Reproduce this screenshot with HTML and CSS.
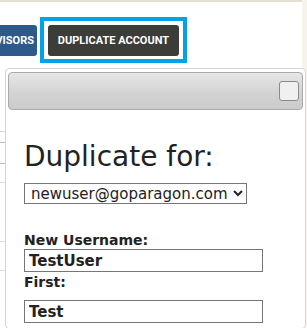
FILE: index.html
```html
<!DOCTYPE html>
<html>
<head>
<meta charset="utf-8">
<link rel="stylesheet" href="styles.css">
</head>
<body>
<div class="page">
  <div class="topline"></div>
  <div class="toolbar">
    <button class="btn btn-blue">ADVISORS</button>
    <span class="highlight">
      <button class="btn btn-dark">DUPLICATE ACCOUNT</button>
    </span>
  </div>
  <div class="content">
    <div class="row row-a"></div>
    <div class="row row-b"><span class="field">e</span></div>
    <div class="row row-c"></div>
    <div class="row row-d"></div>
    <div class="row row-e"></div>
  </div>
</div>
<div class="dialog">
  <div class="titlebar">
    <button class="close" aria-label="Close"></button>
  </div>
  <div class="dialog-body">
    <h2 class="heading">Duplicate for:</h2>
    <select class="select">
      <option>newuser@goparagon.com</option>
    </select>
    <label class="label label-first">New Username:</label>
    <input class="input" type="text" value="TestUser">
    <label class="label label-next">First:</label>
    <input class="input" type="text" value="Test">
  </div>
</div>
</body>
</html>
```

FILE: styles.css
```css
html, body {
  margin: 0;
  padding: 0;
}
body {
  width: 307px;
  height: 328px;
  overflow: hidden;
  background: #f6f3ec;
  font-family: "DejaVu Sans", Verdana, sans-serif;
  color: #222;
}
.page {
  width: 302px;
  height: 328px;
  background: #ffffff;
  overflow: hidden;
}
.topline {
  height: 2px;
  background: #e6e0d3;
}
.toolbar {
  display: flex;
  align-items: flex-start;
  padding-top: 15px;
  height: 48px;
}
.btn {
  border: 0;
  height: 31px;
  font-family: Roboto, "Liberation Sans", sans-serif;
  font-weight: 700;
  font-size: 11px;
  color: #ffffff;
  white-space: nowrap;
}
.btn-blue {
  flex: none;
  width: 64px;
  margin-left: -27px;
  margin-top: 8px;
  background: #2e5a8b;
  text-align: right;
  padding: 0 3px 0 0;
  border-radius: 0 3px 3px 0;
}
.highlight {
  display: block;
  flex: none;
  margin-left: 3px;
  border: 4px solid #00a3e8;
  padding: 4px 4px 3px 4px;
  background: #ffffff;
}
.btn-dark {
  display: block;
  background: #3c3c39;
  border-radius: 3px;
  width: 131px;
  padding: 0;
}
.content {
  margin-top: 56px;
}
.row {
  border-bottom: 1px solid #dcdcdc;
}
.row-a { height: 10px; }
.row-b { height: 40px; }
.row-b .field {
  display: block;
  margin-top: 10px;
  margin-left: -4px;
  border: 1px solid #bbb;
  height: 20px;
  width: 60px;
  font-size: 14px;
  line-height: 20px;
  text-align: right;
  padding-right: 50px;
  box-sizing: content-box;
  color: #555;
}
.row-c { height: 58px; }
.row-d { height: 28px; }
.row-e { height: 60px; }

.dialog {
  position: absolute;
  left: 5px;
  top: 68px;
  width: 295px;
  height: 256px;
  background: #ffffff;
  border: 1px solid #d6d6d6;
  border-radius: 4px;
  padding: 3px 2px 0;
  overflow: hidden;
}
.titlebar {
  height: 36px;
  border: 1px solid #aaaaaa;
  border-radius: 4px;
  background: linear-gradient(#e6e6e6, #d2d2d2 60%, #cccccc);
  display: flex;
  align-items: center;
  justify-content: flex-end;
  padding-right: 3px;
}
.close {
  width: 20px;
  height: 20px;
  border: 1px solid #8a8a8a;
  border-radius: 3px;
  background: #f0f0f0;
  padding: 0;
}
.dialog-body {
  padding: 30px 0 0 16px;
}
.heading {
  margin: 0;
  font-weight: normal;
  font-size: 28px;
  line-height: 34px;
  color: #222;
}
.select {
  display: block;
  margin-top: 9px;
  height: 21px;
  width: 223px;
  font-family: "DejaVu Sans", Verdana, sans-serif;
  font-size: 15px;
  color: #222;
  border: 1px solid #767676;
  border-radius: 0;
  background: #fff;
  padding: 0 0 0 2px;
}
.label {
  display: block;
  font-weight: bold;
  font-size: 14px;
  line-height: 17px;
  color: #222;
}
.label-first {
  margin-top: 28px;
  margin-bottom: 0;
}
.label-next {
  margin-top: 2px;
  margin-bottom: 9px;
}
.input {
  display: block;
  margin-top: 0;
  box-sizing: border-box;
  width: 239px;
  height: 23px;
  border: 1px solid #767676;
  padding: 0 4px;
  font-family: "DejaVu Sans", Verdana, sans-serif;
  font-weight: bold;
  font-size: 15px;
  color: #222;
}
```
